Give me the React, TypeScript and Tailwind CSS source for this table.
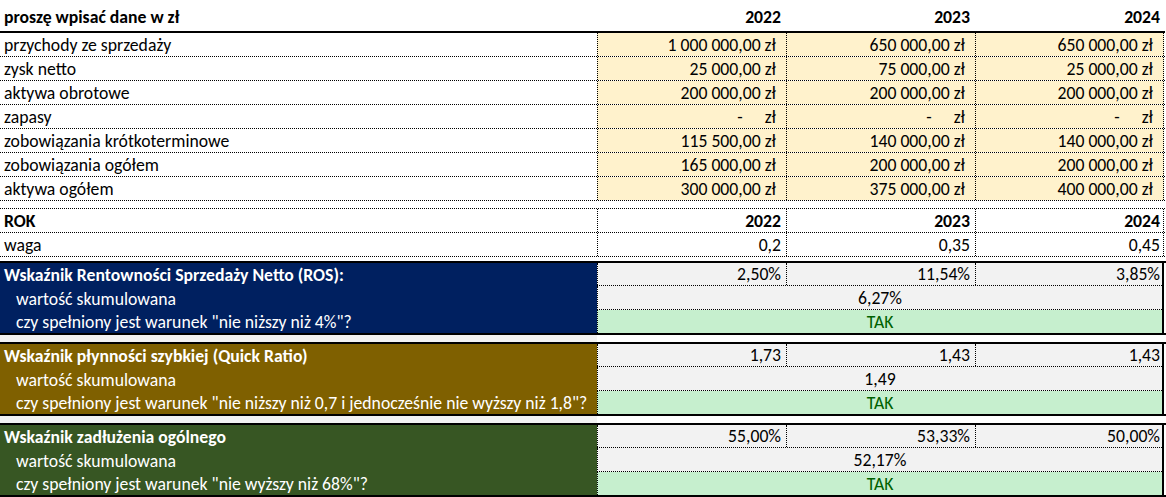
import React from 'react';

const YEARS = ['2022', '2023', '2024'];

const inputs: { label: string; values: (string | null)[] }[] = [
  { label: 'przychody ze sprzedaży', values: ['1 000 000,00 zł', '650 000,00 zł', '650 000,00 zł'] },
  { label: 'zysk netto', values: ['25 000,00 zł', '75 000,00 zł', '25 000,00 zł'] },
  { label: 'aktywa obrotowe', values: ['200 000,00 zł', '200 000,00 zł', '200 000,00 zł'] },
  { label: 'zapasy', values: [null, null, null] },
  { label: 'zobowiązania krótkoterminowe', values: ['115 500,00 zł', '140 000,00 zł', '140 000,00 zł'] },
  { label: 'zobowiązania ogółem', values: ['165 000,00 zł', '200 000,00 zł', '200 000,00 zł'] },
  { label: 'aktywa ogółem', values: ['300 000,00 zł', '375 000,00 zł', '400 000,00 zł'] },
];

const sections = [
  {
    title: 'Wskaźnik Rentowności Sprzedaży Netto (ROS):',
    bg: 'bg-[#002060]',
    values: ['2,50%', '11,54%', '3,85%'],
    total: '6,27%',
    condition: 'czy spełniony jest warunek "nie niższy niż 4%"?',
  },
  {
    title: 'Wskaźnik płynności szybkiej (Quick Ratio)',
    bg: 'bg-[#7f6000]',
    values: ['1,73', '1,43', '1,43'],
    total: '1,49',
    condition: 'czy spełniony jest warunek "nie niższy niż 0,7 i jednocześnie nie wyższy niż 1,8"?',
  },
  {
    title: 'Wskaźnik zadłużenia ogólnego',
    bg: 'bg-[#375623]',
    values: ['55,00%', '53,33%', '50,00%'],
    total: '52,17%',
    condition: 'czy spełniony jest warunek "nie wyższy niż 68%"?',
  },
];

function Section({ s }: { s: (typeof sections)[number] }) {
  return (
    <div className="flex border-y-2 border-black">
      {/* label column */}
      <div className={`w-[597px] shrink-0 text-white ${s.bg}`}>
        <div className="h-[23px] flex items-center pt-[2px] pl-1 font-bold">{s.title}</div>
        <div className="h-6 flex items-center pt-[3px] pl-4">wartość skumulowana</div>
        <div className="h-[23px] flex items-center pt-[2px] pl-4">{s.condition}</div>
      </div>

      {/* data column */}
      <div className="w-[567px] shrink-0 bg-[#f2f2f2] border-r-2 border-black">
        <div className="h-[23px] flex border-b border-dotted border-black">
          {s.values.map((v, i) => (
            <div
              key={i}
              className={`flex items-center justify-end pt-[2px] border-l border-dotted border-black ${
                i === 2 ? 'flex-1 pr-[2px]' : 'w-[189px] pr-[5px]'
              }`}
            >
              {v}
            </div>
          ))}
        </div>
        <div className="h-6 flex items-center justify-center pt-[3px] border-b border-l border-dotted border-black">
          {s.total}
        </div>
        <div className="h-[23px] flex items-center justify-center pt-[2px] bg-[#c6efce] text-[#006100] border-l border-dotted border-black">
          TAK
        </div>
      </div>
    </div>
  );
}

function Gap() {
  return (
    <div className="flex h-[7px]">
      <div className="w-[597px] bg-[#f2f2f2]" />
      <div className="flex-1 bg-white" />
    </div>
  );
}

export default function App() {
  return (
    <div className="w-[1166px] h-[497px] overflow-hidden bg-white text-black text-[17.7px] leading-none whitespace-nowrap font-['Carlito','Lato',sans-serif]">
      {/* header */}
      <div className="flex h-[33px] border-b-2 border-black w-[1165px]">
        <div className="w-[597px] flex items-center pl-1 pt-[5px] font-bold">proszę wpisać dane w zł</div>
        {YEARS.map((y, i) => (
          <div
            key={y}
            className={`w-[189px] flex items-center justify-end pt-[5px] font-bold ${i === 2 ? 'pr-[4px]' : 'pr-[5px]'}`}
          >
            {y}
          </div>
        ))}
      </div>

      {/* inputs */}
      {inputs.map((row) => (
        <div key={row.label} className="flex h-6 border-b border-dotted border-black w-[1165px]">
          <div className="w-[597px] flex items-center pt-[3px] pl-1">{row.label}</div>
          {row.values.map((v, i) => (
            <div
              key={i}
              className={`w-[189px] flex items-center justify-end pt-[3px] pr-[10px] bg-[#fff2cc] border-l border-dotted border-black ${
                i === 2 ? 'border-r' : ''
              }`}
            >
              {v ?? (
                <>
                  <span className="mr-[22px]">-</span>
                  <span>zł</span>
                </>
              )}
            </div>
          ))}
        </div>
      ))}

      <div className="h-2 border-b border-dotted border-black w-[1165px]" />

      {/* ROK */}
      <div className="flex h-6 border-b border-dotted border-black w-[1165px] font-bold">
        <div className="w-[597px] flex items-center pt-[3px] pl-1">ROK</div>
        {YEARS.map((y, i) => (
          <div
            key={y}
            className={`w-[189px] flex items-center justify-end pt-[3px] border-l border-dotted border-black ${
              i === 2 ? 'border-r pr-[3px]' : 'pr-[5px]'
            }`}
          >
            {y}
          </div>
        ))}
      </div>

      {/* waga */}
      <div className="flex h-6 border-b border-dotted border-black w-[1165px]">
        <div className="w-[597px] flex items-center pt-[3px] pl-1">waga</div>
        {['0,2', '0,35', '0,45'].map((w, i) => (
          <div
            key={w}
            className={`w-[189px] flex items-center justify-end pt-[3px] border-l border-dotted border-black ${
              i === 2 ? 'border-r pr-[3px]' : 'pr-[5px]'
            }`}
          >
            {w}
          </div>
        ))}
      </div>

      <div className="h-[4px]" />

      <Section s={sections[0]} />
      <Gap />
      <Section s={sections[1]} />
      <Gap />
      <Section s={sections[2]} />
    </div>
  );
}
